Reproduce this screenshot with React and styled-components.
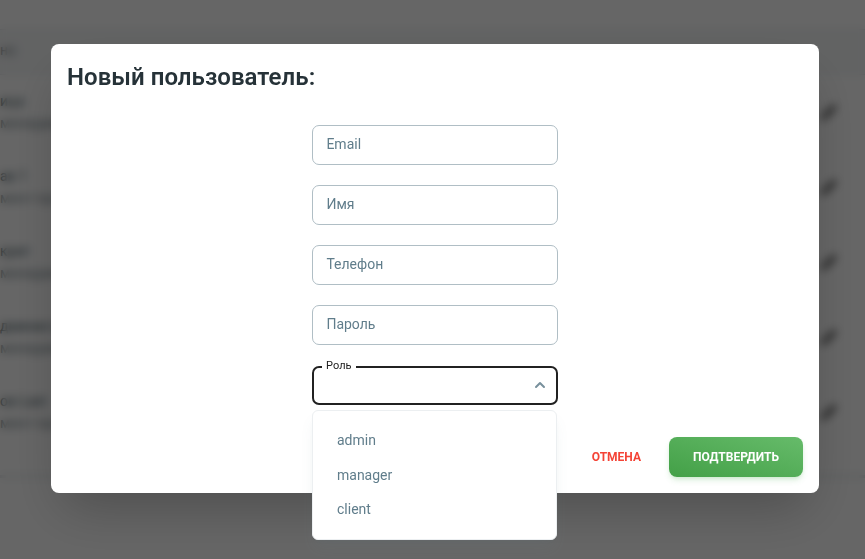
import React from "react";
import styled, { createGlobalStyle } from "styled-components";

const GlobalStyle = createGlobalStyle`
  *, *::before, *::after { box-sizing: border-box; }
  body { margin: 0; font-family: Roboto, sans-serif; background: #fff; overflow: hidden; }
`;

const Page = styled.div`
  height: 559px;
  padding-top: 29px;
  overflow: hidden;
`;

const Table = styled.div`
  border-bottom: 3px solid #e4e8ea;
  height: 449px;
`;

const TableHead = styled.div`
  display: flex;
  align-items: center;
  height: 46px;
  padding-bottom: 5px;
  background: #f5f7f8;
  border-top: 1px solid #e4e8ea;
  border-bottom: 1px solid #e4e8ea;
  color: #263238;
  font-size: 14px;
`;

const HeadText = styled.span`
  opacity: 0.6;
`;

const TableRow = styled.div`
  display: flex;
  justify-content: space-between;
  align-items: center;
  height: 75px;
  padding-right: 28px;
`;

const Person = styled.div`
  display: flex;
  flex-direction: column;
  gap: 3px;
  font-size: 14px;
  line-height: 19px;
  color: #455a64;
`;

const Name = styled.span`
  white-space: nowrap;
`;

const Post = styled.span`
  opacity: 0.7;
`;

const Overlay = styled.div`
  position: fixed;
  inset: 0;
  display: flex;
  justify-content: center;
  align-items: flex-start;
  padding: 44px 46px 0 51px;
  background: rgba(0, 0, 0, 0.6);
  backdrop-filter: blur(5px);
`;

const Dialog = styled.form`
  display: flex;
  flex-direction: column;
  width: 768px;
  height: 449px;
  border-radius: 8px;
  background: #fff;
  box-shadow: 0 25px 50px -12px rgba(0, 0, 0, 0.25);
`;

const Title = styled.h2`
  margin: 0;
  padding: 17px 16px 15px;
  font-size: 24px;
  line-height: 33px;
  font-weight: 600;
  letter-spacing: 0.05px;
  color: #263238;
`;

const Fields = styled.div`
  display: flex;
  flex-direction: column;
  gap: 20px;
  width: 246px;
  margin: 16px auto 0 261px;
`;

const Input = styled.input`
  width: 100%;
  height: 40px;
  padding: 0 13px 2px 13.4px;
  border: 1px solid #b0bec5;
  border-radius: 7px;
  outline: none;
  background: transparent;
  font: 400 14px Roboto, sans-serif;
  color: #455a64;
  &::placeholder { color: #607d8b; opacity: 1; }
`;

const Select = styled.div`
  position: relative;
  height: 40px;
  padding-top: 1px;
`;

const SelectBox = styled.div`
  display: flex;
  align-items: center;
  justify-content: flex-end;
  height: 39px;
  padding: 0 6px 2px 0;
  border: 2px solid #212121;
  border-radius: 7px;
`;

const SelectLabel = styled.span`
  position: absolute;
  top: -5px;
  left: 10px;
  width: 34px;
  padding-left: 4px;
  background: #fff;
  font-size: 11px;
  line-height: 12px;
  letter-spacing: 0.05px;
  color: #212121;
`;

const Menu = styled.ul`
  position: absolute;
  top: 45px;
  left: 0;
  width: 245px;
  height: 130px;
  margin: 0;
  padding: 12px;
  list-style: none;
  border: 1px solid #eceff1;
  border-radius: 6px;
  background: #fff;
  box-shadow: 0 10px 15px -3px rgba(96, 125, 139, 0.1), 0 4px 6px -4px rgba(96, 125, 139, 0.1);
`;

const Option = styled.li`
  height: 34.6px;
  padding: 9px 12px 8px;
  font-size: 14px;
  line-height: 17px;
  color: #607d8b;
`;

const Footer = styled.div`
  display: flex;
  justify-content: flex-end;
  gap: 4px;
  margin-top: auto;
  padding: 16px;
`;

const Button = styled.button`
  height: 40px;
  padding: 0 24px;
  border: 0;
  border-radius: 8px;
  background: ${(p) => (p.$filled ? "linear-gradient(to top right, #43a047, #66bb6a)" : "transparent")};
  box-shadow: ${(p) => (p.$filled ? "0 4px 6px -1px rgba(76,175,80,.2), 0 2px 4px -2px rgba(76,175,80,.2)" : "none")};
  color: ${(p) => (p.$filled ? "#fff" : "#f44336")};
  font: 700 12px/16px Roboto, sans-serif;
  text-transform: uppercase;
`;

const people = [
  { name: "ица", post: "менеджер" },
  { name: "ав 1", post: "мент-проект" },
  { name: "крит", post: "менеджер" },
  { name: "дминистр", post: "менеджер" },
  { name: "ов Last", post: "мент-проект" },
];

const Pencil = () => (
  <svg width="17" height="17" viewBox="0 0 24 24" fill="#111">
    <path d="M21.7 2.3a2.6 2.6 0 0 0-3.7 0L3.7 16.7a5 5 0 0 0-1.3 2.1l-.8 2.7a.7.7 0 0 0 .9.9l2.7-.8a5 5 0 0 0 2.1-1.3L21.7 6a2.6 2.6 0 0 0 0-3.7Z" />
  </svg>
);

const Chevron = () => (
  <svg width="20" height="20" viewBox="0 0 20 20" fill="#78909c">
    <path fillRule="evenodd" d="M14.707 12.707a1 1 0 0 1-1.414 0L10 9.414l-3.293 3.293a1 1 0 0 1-1.414-1.414l4-4a1 1 0 0 1 1.414 0l4 4a1 1 0 0 1 0 1.414Z" />
  </svg>
);

export default function App() {
  return (
    <>
      <GlobalStyle />
      <Page>
        <Table>
          <TableHead><HeadText>но</HeadText></TableHead>
          {people.map((p) => (
            <TableRow key={p.name}>
              <Person>
                <Name>{p.name}</Name>
                <Post>{p.post}</Post>
              </Person>
              <Pencil />
            </TableRow>
          ))}
        </Table>
      </Page>
      <Overlay>
        <Dialog>
          <Title>Новый пользователь:</Title>
          <Fields>
            {["Email", "Имя", "Телефон", "Пароль"].map((label) => (
              <Input key={label} placeholder={label} />
            ))}
            <Select>
              <SelectBox><Chevron /></SelectBox>
              <SelectLabel>Роль</SelectLabel>
              <Menu>
                {["admin", "manager", "client"].map((role) => (
                  <Option key={role}>{role}</Option>
                ))}
              </Menu>
            </Select>
          </Fields>
          <Footer>
            <Button type="button">Отмена</Button>
            <Button type="button" $filled>Подтвердить</Button>
          </Footer>
        </Dialog>
      </Overlay>
    </>
  );
}
